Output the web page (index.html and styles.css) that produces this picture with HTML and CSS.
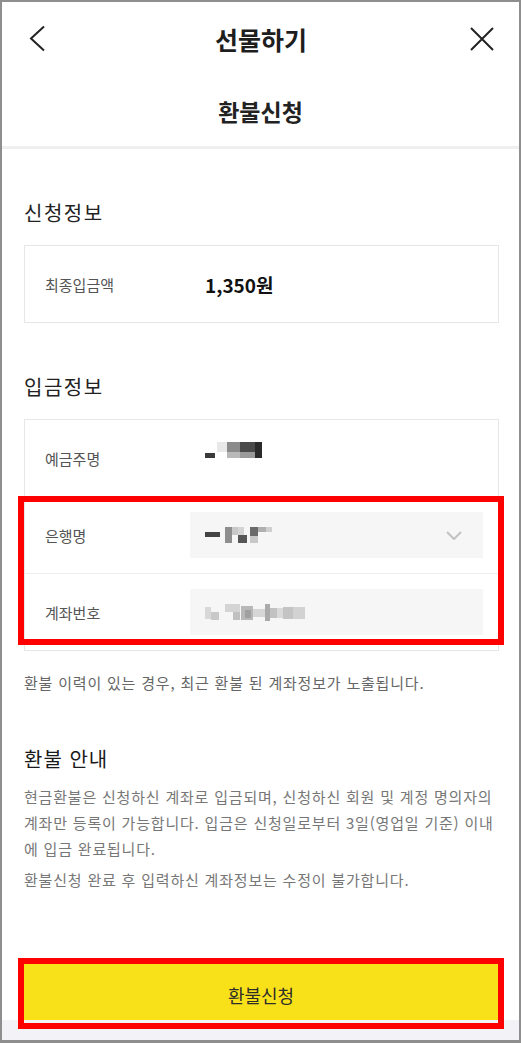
FILE: index.html
```html
<!DOCTYPE html>
<html lang="ko">
<head>
    <meta charset="UTF-8">
    <meta name="viewport" content="width=device-width, initial-scale=1.0">
    <title>환불신청</title>
    <link rel="stylesheet" href="styles.css">
</head>
<body>
    <div class="screen">
        <header class="topbar">
            <svg class="icon" width="24" height="28" viewBox="0 0 24 28"><polyline points="16,1.5 3,13.5 16,25.5" fill="none" stroke="#222" stroke-width="2"/></svg>
            <h1>선물하기</h1>
            <svg class="icon" width="24" height="24" viewBox="0 0 24 24"><path d="M1 1L23 23M23 1L1 23" stroke="#222" stroke-width="2"/></svg>
        </header>
        <div class="subhead">
            <h2>환불신청</h2>
        </div>

        <main class="content">
            <h3 class="block-title">신청정보</h3>
            <div class="card">
                <div class="row">
                    <span class="label">최종입금액</span>
                    <span class="value amount">1,350원</span>
                </div>
            </div>

            <h3 class="block-title">입금정보</h3>
            <div class="card">
                <div class="row">
                    <span class="label">예금주명</span>
                    <span class="value">
                        <svg width="60" height="32" viewBox="0 0 60 32">
                            <rect x="0" y="11" width="10" height="5" fill="#3a3a3a"/>
                            <rect x="12" y="0" width="10" height="10" fill="#e8e8e8"/>
                            <rect x="22" y="0" width="13" height="10" fill="#8a8a8a"/>
                            <rect x="22" y="10" width="13" height="6" fill="#b8b8b8"/>
                            <rect x="35" y="0" width="15" height="10" fill="#4a4a4a"/>
                            <rect x="35" y="10" width="15" height="6" fill="#9a9a9a"/>
                            <rect x="50" y="0" width="7" height="16" fill="#2a2a2a"/>
                        </svg>
                    </span>
                </div>
                <div class="marked">
                    <div class="row">
                        <span class="label">은행명</span>
                        <div class="field">
                            <svg width="70" height="16" viewBox="0 0 70 16">
                                <rect x="0" y="5" width="15" height="5" fill="#444"/>
                                <rect x="20" y="0" width="7" height="16" fill="#8e8e8e"/>
                                <rect x="27" y="0" width="6" height="8" fill="#c8c8c8"/>
                                <rect x="33" y="0" width="6" height="8" fill="#d4d4d4"/>
                                <rect x="33" y="8" width="9" height="8" fill="#555"/>
                                <rect x="45" y="0" width="8" height="9" fill="#6a6a6a"/>
                                <rect x="45" y="9" width="8" height="7" fill="#c8c8c8"/>
                                <rect x="53" y="0" width="8" height="5" fill="#b0b0b0"/>
                                <rect x="61" y="0" width="6" height="5" fill="#d0d0d0"/>
                            </svg>
                            <svg width="16" height="9" viewBox="0 0 16 9"><polyline points="1,1 8,8 15,1" fill="none" stroke="#c2c2c2" stroke-width="2"/></svg>
                        </div>
                    </div>
                    <div class="row">
                        <span class="label">계좌번호</span>
                        <div class="field">
                            <svg width="105" height="17" viewBox="0 0 105 17">
                                <rect x="0" y="3" width="6" height="12" fill="#d8d8d8"/>
                                <rect x="6" y="8" width="8" height="8" fill="#c8c8c8"/>
                                <rect x="20" y="0" width="15" height="8" fill="#d4d4d4"/>
                                <rect x="28" y="8" width="7" height="8" fill="#c0c0c0"/>
                                <rect x="36" y="2" width="12" height="14" fill="#b8b8b8"/>
                                <rect x="40" y="6" width="6" height="8" fill="#a0a0a0"/>
                                <rect x="48" y="5" width="12" height="8" fill="#d6d6d6"/>
                                <rect x="60" y="0" width="5" height="17" fill="#aaa"/>
                                <rect x="65" y="4" width="7" height="10" fill="#c2c2c2"/>
                                <rect x="72" y="4" width="6" height="10" fill="#dadada"/>
                                <rect x="78" y="3" width="10" height="12" fill="#c4c4c4"/>
                                <rect x="88" y="3" width="12" height="12" fill="#d2d2d2"/>
                            </svg>
                        </div>
                    </div>
                </div>
            </div>
            <p class="note">환불 이력이 있는 경우, 최근 환불 된 계좌정보가 노출됩니다.</p>

            <h3 class="guide-title">환불 안내</h3>
            <p class="guide">현금환불은 신청하신 계좌로 입금되며, 신청하신 회원 및 계정 명의자의<br>계좌만 등록이 가능합니다. 입금은 신청일로부터 3일(영업일 기준) 이내<br>에 입금 완료됩니다.</p>
            <p class="guide">환불신청 완료 후 입력하신 계좌정보는 수정이 불가합니다.</p>
        </main>

        <footer class="bottom">
            <div class="btn-wrap">
                <button class="btn">환불신청</button>
            </div>
        </footer>
        <div class="home-bar"></div>
    </div>
</body>
</html>
```

FILE: styles.css
```css
body {
    margin: 0;
    background: #fff;
    font-family: "Noto Sans CJK KR", "Noto Sans", sans-serif;
}
.screen {
    width: 521px;
    height: 1043px;
    box-sizing: border-box;
    border: 2px solid #8e8e8e;
    border-bottom-width: 3px;
    display: flex;
    flex-direction: column;
}
.topbar {
    height: 74px;
    display: flex;
    align-items: center;
    justify-content: space-between;
    padding: 0 25px 0 26px;
}
.topbar h1 {
    margin: 0;
    font-size: 25px;
    font-weight: 700;
    color: #1e1e1e;
}
.icon {
    display: block;
}
.subhead {
    height: 70px;
    display: flex;
    align-items: center;
    justify-content: center;
    border-bottom: 3px solid #efefef;
}
.subhead h2 {
    margin: 0;
    font-size: 23px;
    font-weight: 700;
    color: #222;
}
.content {
    flex: 1;
    padding: 0 20px 0 22px;
}
.block-title {
    margin: 49px 0 17px;
    font-size: 20px;
    line-height: 30px;
    font-weight: 400;
    letter-spacing: 1.5px;
    color: #222;
}
.card {
    border: 1px solid #e7e7e7;
}
.row {
    display: flex;
    align-items: center;
    height: 76px;
    padding: 0 15px 0 20px;
}
.row + .row {
    border-top: 1px solid #ededed;
}
.label {
    width: 145px;
    flex: none;
    font-size: 15px;
    color: #555;
}
.value {
    padding-left: 15px;
    display: flex;
}
.amount {
    font-size: 19px;
    font-weight: 700;
    color: #111;
}
.field {
    flex: 1;
    height: 46px;
    background: #f5f6f5;
    display: flex;
    align-items: center;
    justify-content: space-between;
    padding: 0 21px 0 15px;
}
.marked {
    position: relative;
    border-top: 1px solid #ededed;
}
.marked::after {
    content: "";
    position: absolute;
    top: -1px;
    left: -7px;
    right: -6px;
    bottom: 5px;
    border: 6px solid #ff0000;
    pointer-events: none;
}
.note {
    margin: 19px 0 0;
    font-size: 15px;
    line-height: 26px;
    letter-spacing: 0.8px;
    color: #666;
}
.guide-title {
    margin: 48px 0 10px;
    font-size: 20px;
    line-height: 30px;
    font-weight: 400;
    letter-spacing: 1px;
    color: #1a1a1a;
}
.guide {
    margin: 0;
    font-size: 15px;
    line-height: 26px;
    letter-spacing: 0.8px;
    color: #777;
    white-space: nowrap;
}
.guide + .guide {
    margin-top: 5px;
}
.bottom {
    padding: 0 21px 0 22px;
}
.btn-wrap {
    position: relative;
}
.btn-wrap::after {
    content: "";
    position: absolute;
    top: -6px;
    left: -6px;
    right: -6px;
    bottom: -9px;
    border: 6px solid #ff0000;
    pointer-events: none;
}
.btn {
    display: block;
    width: 100%;
    height: 56px;
    padding: 6px 0 0;
    border: none;
    background: #f9e11a;
    font-family: inherit;
    font-size: 18px;
    font-weight: 400;
    color: #2e2e2a;
}
.home-bar {
    height: 20px;
    background: #f3f3f7;
}
```
